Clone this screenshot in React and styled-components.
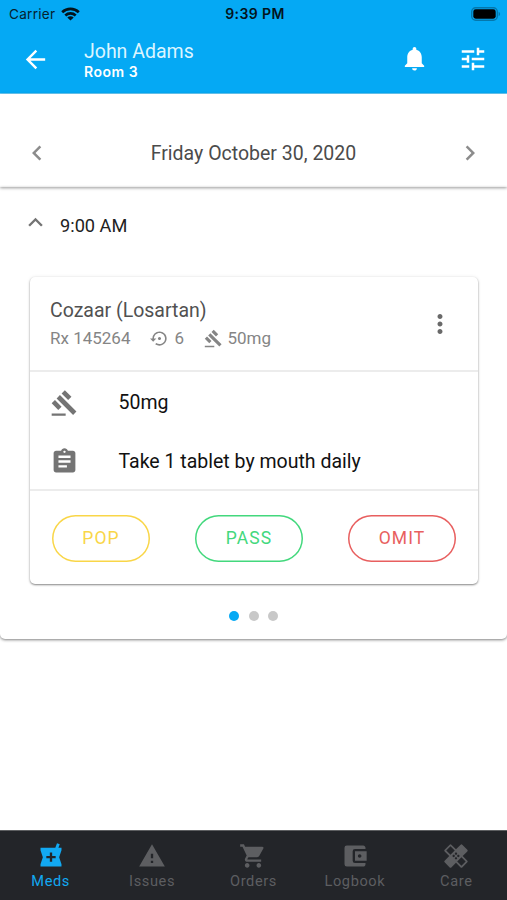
import React from 'react'
import styled, { createGlobalStyle } from 'styled-components'
import {
  MdArrowBack, MdNotifications, MdTune, MdChevronLeft, MdChevronRight,
  MdKeyboardArrowUp, MdSettingsBackupRestore, MdGavel, MdMoreVert, MdAssignment,
  MdLocalPharmacy, MdWarning, MdShoppingCart, MdAccountBalanceWallet, MdHealing
} from 'react-icons/md'

const GlobalStyle = createGlobalStyle`
  * { box-sizing: border-box; }
  body {
    margin: 0;
    background: #fff;
    font-family: Roboto, sans-serif;
  }
  svg { display: block; flex-shrink: 0; }
`;

const Screen = styled.div`
  display: flex;
  flex-direction: column;
  width: 507px;
  height: 900px;
  overflow: hidden;
`;

const Header = styled.header`
  height: 94px;
  background: #05a9f4;
  border-bottom: 1px solid #6accf8;
`;

const StatusBar = styled.div`
  display: grid;
  grid-template-columns: 1fr auto 1fr;
  align-items: center;
  height: 27px;
  padding: 0 6px 0 9px;
  font-family: Inter, sans-serif;
  color: #06222f;
`;

const Carrier = styled.div`
  display: flex;
  align-items: center;
  gap: 6px;
  font-size: 13.6px;
  letter-spacing: 0.25px;
`;

const Clock = styled.div`
  font-weight: 600;
  font-size: 14px;
  letter-spacing: 0.4px;
  color: #03141c;
`;

const Battery = styled.svg`
  justify-self: end;
`;

const AppBar = styled.div`
  display: flex;
  align-items: center;
  height: 64px;
  padding: 0 19px 0 21px;
  color: #fff;
`;

const Patient = styled.div`
  flex: 1;
  margin: 2px 0 0 34px;
`;

const Name = styled.div`
  font-size: 19.5px;
  line-height: 23px;
  color: #dcf5ff;
`;

const Room = styled.div`
  font-family: Inter, sans-serif;
  font-size: 14px;
  font-weight: 600;
  line-height: 17px;
  letter-spacing: 0.5px;
`;

const Actions = styled.div`
  display: flex;
  gap: 29px;
`;

const DateBar = styled.div`
  display: flex;
  align-items: center;
  justify-content: space-between;
  height: 93px;
  padding: 24px 22px 0;
  font-size: 19.5px;
  color: #4b4b4b;
  box-shadow: 0 1px 3px rgba(0, 0, 0, 0.4);
  svg { color: #8c8c8c; }
`;

const DateText = styled.div`
  padding-top: 2px;
`;

const Slot = styled.section`
  height: 452px;
  border-radius: 0 0 5px 5px;
  box-shadow: 0 1px 3px rgba(0, 0, 0, 0.5);
`;

const SlotTitle = styled.div`
  display: flex;
  align-items: center;
  height: 77px;
  gap: 10px;
  padding-left: 21px;
  font-size: 18.2px;
  color: #222;
  svg { color: #747474; margin-top: -6px; }
`;

const Card = styled.div`
  width: 448px;
  height: 307px;
  margin: 13px 0 0 30px;
  border-radius: 5px;
  box-shadow: 0 1px 2px rgba(0, 0, 0, 0.45), 0 0 4px rgba(0, 0, 0, 0.07);
`;

const CardHeader = styled.div`
  display: flex;
  align-items: center;
  justify-content: space-between;
  height: 95px;
  padding: 1px 23px 0 20px;
  border-bottom: 2px solid #ececec;
  > svg { color: #696969; }
`;

const DrugName = styled.div`
  padding-top: 1px;
  font-size: 19.5px;
  line-height: 26px;
  color: #515151;
`;

const Meta = styled.div`
  display: flex;
  align-items: center;
  margin-top: 1px;
  font-size: 17px;
  line-height: 26px;
  color: #858585;
`;

const MetaItem = styled.span`
  display: flex;
  align-items: center;
  gap: 5px;
  margin-left: ${props => props.$left || 0}px;
`;

const Details = styled.div`
  height: 119px;
  padding-top: 1px;
  border-bottom: 2px solid #ececec;
`;

const Detail = styled.div`
  display: flex;
  align-items: center;
  height: 58.5px;
  padding: 1px 0 0 20px;
  font-size: 19.5px;
  color: #111;
  svg { width: 29px; margin-right: 39.5px; color: #747474; }
`;

const Buttons = styled.div`
  display: flex;
  justify-content: space-between;
  padding: 24px 22px 0;
`;

const PillButton = styled.button`
  width: ${props => props.$width}px;
  height: 47px;
  padding: 0 0 2px;
  background: none;
  border: 0;
  border-radius: 24px;
  box-shadow: inset 0 0 0 1.5px ${props => props.$color};
  color: ${props => props.$color};
  font-family: inherit;
  font-size: 17.5px;
  letter-spacing: 1.1px;
`;

const Dots = styled.div`
  display: flex;
  justify-content: center;
  gap: 9.5px;
  margin-top: 26.5px;
`;

const Dot = styled.span`
  width: 10px;
  height: 10px;
  border-radius: 50%;
  background: ${props => props.$active ? '#05a9f4' : '#c8c8c8'};
`;

const TabBar = styled.nav`
  display: grid;
  grid-template-columns: repeat(5, 1fr);
  height: 70px;
  margin-top: auto;
  background: #232529;
  border-top: 1px solid #5d5f61;
`;

const Tab = styled.div`
  display: flex;
  flex-direction: column;
  align-items: center;
  padding-top: 11px;
  font-size: 14.6px;
  line-height: 22px;
  letter-spacing: 0.6px;
  color: ${props => props.$active ? '#12a9f2' : '#5d5e61'};
`;

const tabs = [
  { label: 'Meds', icon: MdLocalPharmacy, active: true },
  { label: 'Issues', icon: MdWarning },
  { label: 'Orders', icon: MdShoppingCart },
  { label: 'Logbook', icon: MdAccountBalanceWallet },
  { label: 'Care', icon: MdHealing },
]

const WifiIcon = () => (
  <svg width="19" height="14" viewBox="0 0 19 14" fill="none" stroke="#03141c" strokeWidth="2.7">
    <path d="M1.2 5.2C5.9.7 13.1.7 17.8 5.2" />
    <path d="M4.3 8.4c3-2.8 7.4-2.8 10.4 0" />
    <path d="M9.5 13.6 6.3 10.6c1.8-1.7 4.6-1.7 6.4 0z" fill="#03141c" stroke="none" />
  </svg>
)

const BatteryIcon = () => (
  <Battery width="30" height="14" viewBox="0 0 30 14">
    <rect x="0.7" y="0.7" width="25.6" height="12.6" rx="4" fill="none" stroke="#0477ac" strokeWidth="1.4" />
    <rect x="2.3" y="2.3" width="22.4" height="9.4" rx="2.4" fill="#000" />
    <path d="M27.6 4.8c2 .8 2 3.6 0 4.4z" fill="#0477ac" />
  </Battery>
)

export default () => {
  return (
    <Screen>
      <GlobalStyle />
      <Header>
        <StatusBar>
          <Carrier>Carrier <WifiIcon /></Carrier>
          <Clock>9:39 PM</Clock>
          <BatteryIcon />
        </StatusBar>
        <AppBar>
          <MdArrowBack size={29} />
          <Patient>
            <Name>John Adams</Name>
            <Room>Room 3</Room>
          </Patient>
          <Actions>
            <MdNotifications size={29} />
            <MdTune size={30} />
          </Actions>
        </AppBar>
      </Header>
      <DateBar>
        <MdChevronLeft size={30} />
        <DateText>Friday October 30, 2020</DateText>
        <MdChevronRight size={30} />
      </DateBar>
      <Slot>
        <SlotTitle>
          <MdKeyboardArrowUp size={29} />
          9:00 AM
        </SlotTitle>
        <Card>
          <CardHeader>
            <div>
              <DrugName>Cozaar (Losartan)</DrugName>
              <Meta>
                <MetaItem>Rx 145264</MetaItem>
                <MetaItem $left={20}><MdSettingsBackupRestore size={19} /> 6</MetaItem>
                <MetaItem $left={19.5}><MdGavel size={19} /> 50mg</MetaItem>
              </Meta>
            </div>
            <MdMoreVert size={30} />
          </CardHeader>
          <Details>
            <Detail><MdGavel size={28} />50mg</Detail>
            <Detail><MdAssignment size={29} />Take 1 tablet by mouth daily</Detail>
          </Details>
          <Buttons>
            <PillButton $width={98} $color="#f9d648">POP</PillButton>
            <PillButton $width={108} $color="#43d87d">PASS</PillButton>
            <PillButton $width={108} $color="#e85f5f">OMIT</PillButton>
          </Buttons>
        </Card>
        <Dots>
          <Dot $active />
          <Dot />
          <Dot />
        </Dots>
      </Slot>
      <TabBar>
        {tabs.map(({ label, icon: Icon, active }) => (
          <Tab key={label} $active={active}>
            <Icon size={28} />
            {label}
          </Tab>
        ))}
      </TabBar>
    </Screen>
  )
};
